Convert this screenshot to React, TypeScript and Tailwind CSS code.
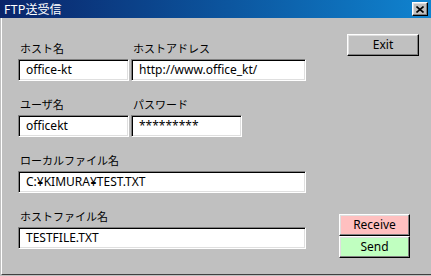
const raised =
  "border border-t-white border-l-white border-r-black border-b-black shadow-[inset_-1px_-1px_0_#808080,inset_1px_1px_0_#dfdfdf]";
const sunken =
  "border border-t-[#808080] border-l-[#808080] border-r-white border-b-white shadow-[inset_1px_1px_0_#000,inset_-1px_-1px_0_#dfdfdf]";

function Field({ label, value, w }: { label: string; value: string; w: string }) {
  return (
    <div className="flex flex-col">
      <div className="h-[18px] pl-[2px] text-[11px] leading-[14px] text-black">{label}</div>
      <div className={`${sunken} ${w} flex h-[22px] items-center bg-white pl-[7px] font-['Noto_Sans',sans-serif] text-[12px] text-black`}>
        {value}
      </div>
    </div>
  );
}

function WinButton({ label, bg, cls }: { label: string; bg: string; cls: string }) {
  return (
    <button className={`${raised} ${bg} ${cls} flex h-[22px] items-center justify-center font-['Noto_Sans',sans-serif] text-[12px] text-black`}>
      {label}
    </button>
  );
}

export default function App() {
  return (
    <div className="flex h-[276px] w-[431px] flex-col overflow-hidden bg-[#c0c0c0] font-['Noto_Sans_CJK_JP','Noto_Sans',sans-serif]">
      {/* title bar */}
      <div className="flex h-[18px] items-center justify-between bg-gradient-to-r from-[#0a246a] to-[#1084d0] pl-[4px] pr-[3px]">
        <span className="text-[12px] leading-none text-white">FTP送受信</span>
        <button className={`${raised} flex h-[14px] w-[16px] items-center justify-center bg-[#c0c0c0]`}>
          <svg width="8" height="7" viewBox="0 0 8 7">
            <path d="M0.5 0.5 L7.5 6.5 M7.5 0.5 L0.5 6.5" stroke="#000" strokeWidth="1.6" />
          </svg>
        </button>
      </div>

      {/* body */}
      <div className="ml-[1px] flex h-[257px] border-b border-l border-b-[#404040] border-l-white">
        <div className="flex flex-col gap-[16px] pl-[16px] pt-[23px]">
          <div className="flex gap-[2px]">
            <Field label="ホスト名" value="office-kt" w="w-[111px]" />
            <Field label="ホストアドレス" value="http://www.office_kt/" w="w-[175px]" />
          </div>
          <div className="flex gap-[2px]">
            <Field label="ユーザ名" value="officekt" w="w-[111px]" />
            <Field label="パスワード" value="*********" w="w-[111px]" />
          </div>
          <Field label="ローカルファイル名" value="C:¥KIMURA¥TEST.TXT" w="w-[288px]" />
          <Field label="ホストファイル名" value="TESTFILE.TXT" w="w-[288px]" />
        </div>

        <div className="flex flex-1 flex-col items-end pb-[16px] pt-[16px]">
          <WinButton label="Exit" bg="bg-[#c0c0c0]" cls="mr-[12px] w-[72px]" />
          <div className="mr-[21px] mt-auto flex flex-col">
            <WinButton label="Receive" bg="bg-[#ffc0c0]" cls="w-[71px]" />
            <WinButton label="Send" bg="bg-[#c0ffc0]" cls="w-[71px]" />
          </div>
        </div>
      </div>
    </div>
  );
}
